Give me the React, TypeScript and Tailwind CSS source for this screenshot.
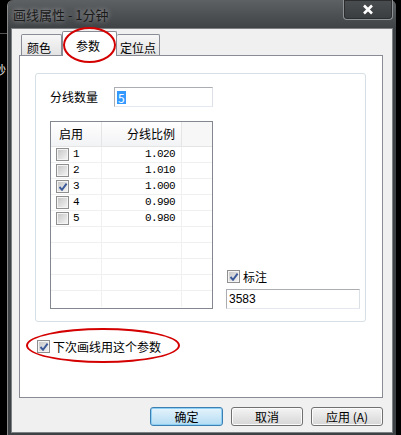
import React from "react";

const rows = [
  { n: 1, v: "1.020", on: false },
  { n: 2, v: "1.010", on: false },
  { n: 3, v: "1.000", on: true },
  { n: 4, v: "0.990", on: false },
  { n: 5, v: "0.980", on: false },
];

function Check({ checked }: { checked?: boolean }) {
  return (
    <span className="relative flex h-[13px] w-[13px] shrink-0 items-center justify-center border border-[#8f8f8f] bg-[#f4f4f4]">
      <span className="h-[9px] w-[9px] bg-gradient-to-br from-[#c8c8c8] to-[#f2f2f2]" />
      {checked && (
        <svg className="absolute left-[1px] top-[1px]" width="10" height="10" viewBox="0 0 10 10">
          <path d="M1.5 5 L4 7.8 L8.6 1.6" fill="none" stroke="#3b5a9a" strokeWidth="1.9" />
        </svg>
      )}
    </span>
  );
}

function Btn({ label, primary, w }: { label: string; primary?: boolean; w: string }) {
  return (
    <div
      className={
        primary
          ? `flex h-[19px] ${w} items-center justify-center rounded-[3px] border border-[#3c7fb1] bg-gradient-to-b from-[#e5f4fc] to-[#b4dcf3] text-[12px] shadow-[inset_0_0_0_1px_#8ed0f5]`
          : `flex h-[19px] ${w} items-center justify-center rounded-[3px] border border-[#707070] bg-gradient-to-b from-[#f4f4f4] to-[#d6d6d6] text-[12px] shadow-[inset_0_0_0_1px_#fbfbfb]`
      }
    >
      {label}
    </div>
  );
}

export default function App() {
  return (
    <div className="relative h-[435px] w-[401px] overflow-hidden bg-black font-['Noto_Sans_CJK_SC','Noto_Sans',sans-serif] text-[12px] leading-none text-black">
      <div className="flex h-full">
        {/* chart behind the dialog */}
        <div className="flex w-[7px] flex-col overflow-hidden">
          <div className="mt-[33px] h-px w-full bg-[#555]" />
          <div className="ml-[-6px] mt-[30px] text-[12px] text-[#e8e8e8]">秒</div>
        </div>

        {/* window */}
        <div className="flex h-[440px] w-[389px] flex-col rounded-t-[6px] border-l border-[#8a8a8a] bg-[#3f4245]">
          <div className="flex h-[28px] items-start justify-between rounded-t-[6px] bg-gradient-to-b from-[#5e6164] to-[#404346]">
            <span className="pl-[5px] pt-[8px] text-[13px] text-[#1a1a1a] [text-shadow:0_0_5px_rgba(255,255,255,0.55)]">
              画线属性 - 1分钟
            </span>
            <div className="mr-[3px] flex h-[20px] w-[50px] items-center justify-center rounded-b-[4px] border border-t-0 border-[#8e9194] bg-gradient-to-b from-[#4b4e51] to-[#3a3d40] shadow-[inset_0_0_0_1px_#2a2c2e]">
              <svg width="12" height="11" viewBox="0 0 12 11">
                <path d="M2 1.5 L10 9.5 M10 1.5 L2 9.5" stroke="#ffffff" strokeWidth="2.6" />
              </svg>
            </div>
          </div>

          {/* client */}
          <div className="mx-[3px] flex h-[405px] flex-col border border-[#7e8184] bg-[#f0f0f0] pl-[7px] pr-[9px] pt-[2px]">
            {/* tabs */}
            <div className="relative z-10 flex h-[24px] items-end pl-[2px]">
              <div className="flex h-[21px] w-[41px] items-start rounded-t-[2px] border border-b-0 border-[#898c95] bg-gradient-to-b from-[#f7f7f7] to-[#e3e3e3] pl-[5px] pt-[7px]">
                颜色
              </div>
              <div className="-mb-px flex h-[25px] w-[55px] items-start justify-center rounded-t-[2px] border border-b-0 border-[#898c95] bg-white pr-[3px] pt-[8px]">
                参数
              </div>
              <div className="flex h-[21px] w-[43px] items-start justify-center rounded-t-[2px] border border-b-0 border-l-0 border-[#898c95] bg-gradient-to-b from-[#f7f7f7] to-[#e3e3e3] pt-[7px]">
                定位点
              </div>
            </div>

            {/* panel */}
            <div className="flex h-[343px] flex-col border border-[#898c95] bg-white pl-[15px] pt-[17px]">
              <div className="flex h-[249px] w-[331px] flex-col rounded-[3px] border border-[#d5dfe5] pb-[12px] pl-[14px] pt-[13px]">
                <div className="flex h-[20px] items-center">
                  <span className="w-[64px]">分线数量</span>
                  <div className="flex h-[20px] w-[99px] items-center border border-[#abadb3] border-r-[#dbdfe6] border-b-[#e3e9ef] pl-[2px]">
                    <span className="bg-[#3399ff] px-[1px] text-[12px] leading-[13px] text-white">5</span>
                  </div>
                </div>

                <div className="mt-[14px] flex">
                  {/* list */}
                  <div className="flex h-[188px] w-[163px] flex-col border border-[#828790]">
                    <div className="flex h-[25px] border-b border-[#e5e5e5] bg-gradient-to-b from-white to-[#f2f3f5]">
                      <div className="flex w-[51px] items-center border-r border-[#e5e5e5] pl-[8px]">启用</div>
                      <div className="flex w-[80px] items-center justify-end border-r border-[#e5e5e5] pr-[6px]">分线比例</div>
                      <div className="flex-1 bg-[#f7f7f7]" />
                    </div>
                    {Array.from({ length: 10 }).map((_, i) => {
                      const r = rows[i];
                      return (
                        <div key={i} className="flex h-[16px] border-b border-[#f0f0f0] last:border-b-0">
                          <div className="flex w-[51px] items-center gap-[4px] border-r border-[#f0f0f0] pl-[5px]">
                            {r && (
                              <>
                                <Check checked={r.on} />
                                <span className="font-['Liberation_Mono',monospace] text-[11px]">{r.n}</span>
                              </>
                            )}
                          </div>
                          <div className="flex w-[80px] items-center justify-end border-r border-[#f0f0f0] pr-[6px] font-['Liberation_Mono',monospace] text-[11px] tracking-[-0.6px]">
                            {r ? r.v : ""}
                          </div>
                          <div className="flex-1" />
                        </div>
                      );
                    })}
                  </div>

                  <div className="ml-[13px] flex w-[134px] flex-col justify-end">
                    <div className="flex h-[13px] items-center gap-[3px] pl-px">
                      <Check checked />
                      <span className="text-[12px]">标注</span>
                    </div>
                    <div className="mt-[6px] flex h-[20px] items-center border border-[#abadb3] border-r-[#dbdfe6] border-b-[#e3e9ef] pl-[2px] font-['Liberation_Sans',sans-serif] text-[12px]">
                      3583
                    </div>
                  </div>
                </div>
              </div>

              <div className="ml-[2px] mt-[18px] flex h-[13px] items-center gap-[3px]">
                <Check checked />
                <span>下次画线用这个参数</span>
              </div>
            </div>

            <div className="mt-[9px] flex justify-end gap-[8px]">
              <Btn label="确定" primary w="w-[73px]" />
              <Btn label="取消" w="w-[72px]" />
              <Btn label="应用 (A)" w="w-[72px]" />
            </div>
          </div>
        </div>
      </div>

      {/* red annotation circles */}
      <div className="absolute left-[63px] top-[27px] z-20 h-[36px] w-[53px] rounded-[50%] border-2 border-[#d40000]" />
      <div className="absolute left-[26px] top-[328px] z-20 h-[35px] w-[154px] rounded-[50%] border-2 border-[#d40000]" />
    </div>
  );
}
